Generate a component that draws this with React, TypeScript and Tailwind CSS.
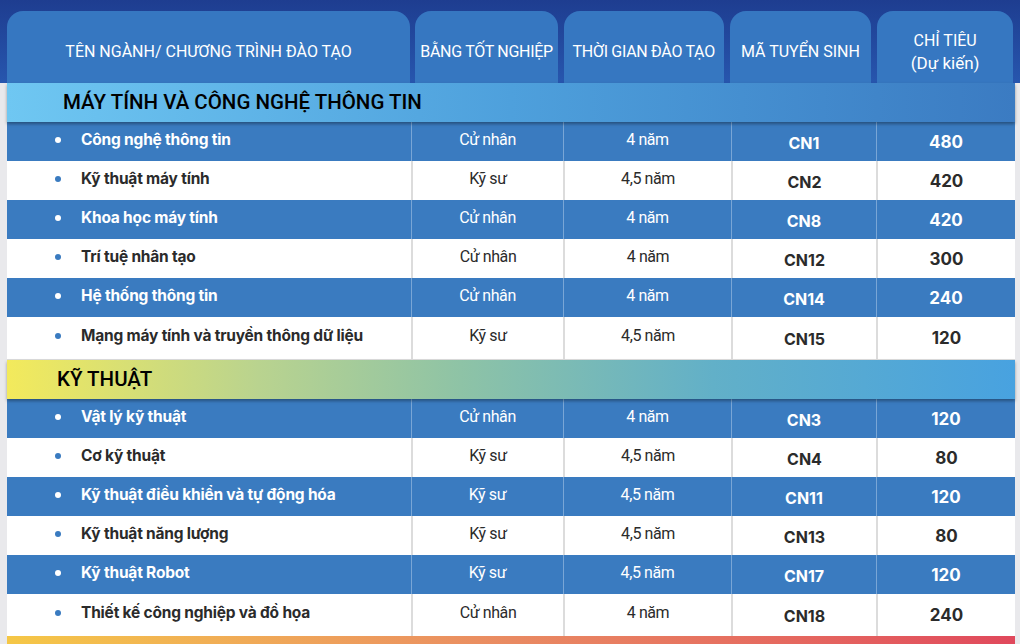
const sec1 = [
  ["Công nghệ thông tin", "Cử nhân", "4 năm", "CN1", "480"],
  ["Kỹ thuật máy tính", "Kỹ sư", "4,5 năm", "CN2", "420"],
  ["Khoa học máy tính", "Cử nhân", "4 năm", "CN8", "420"],
  ["Trí tuệ nhân tạo", "Cử nhân", "4 năm", "CN12", "300"],
  ["Hệ thống thông tin", "Cử nhân", "4 năm", "CN14", "240"],
  ["Mạng máy tính và truyền thông dữ liệu", "Kỹ sư", "4,5 năm", "CN15", "120"],
];

const sec2 = [
  ["Vật lý kỹ thuật", "Cử nhân", "4 năm", "CN3", "120"],
  ["Cơ kỹ thuật", "Kỹ sư", "4,5 năm", "CN4", "80"],
  ["Kỹ thuật điều khiển và tự động hóa", "Kỹ sư", "4,5 năm", "CN11", "120"],
  ["Kỹ thuật năng lượng", "Kỹ sư", "4,5 năm", "CN13", "80"],
  ["Kỹ thuật Robot", "Kỹ sư", "4,5 năm", "CN17", "120"],
  ["Thiết kế công nghiệp và đồ họa", "Cử nhân", "4 năm", "CN18", "240"],
];

const inter = "font-['Inter','Liberation_Sans',sans-serif]";
const roboto = "font-['Roboto','Liberation_Sans',sans-serif]";

function Row({ r, blue, last }: { r: string[]; blue: boolean; last: boolean }) {
  const bg = blue ? "bg-[#3a7bc0] text-white" : "bg-white text-[#2b2b2b]";
  const div = blue ? "border-l border-[#79a6d6]" : "border-l-2 border-[#dcdcdc]";
  const h = last ? "h-[42px]" : "h-[39px]";
  return (
    <div className={`grid grid-cols-[404px_152px_168px_145px_139px] ${h} ${bg}`}>
      <div className={`flex items-center pb-[4px] pl-[48px] text-[15.5px] font-bold tracking-[-0.2px] ${inter}`}>
        <span className={blue ? "mr-[20px] h-[6px] w-[6px] rounded-full bg-white" : "mr-[20px] h-[6px] w-[6px] rounded-full bg-[#3a7bc0]"} />
        {r[0]}
      </div>
      <div className={`flex items-center justify-center pb-[4px] text-[16px] tracking-tight ${roboto} ${div}`}>{r[1]}</div>
      <div className={`flex items-center justify-center pb-[4px] text-[16px] tracking-tight ${roboto} ${div}`}>{r[2]}</div>
      <div className={`flex items-center justify-center pt-[2px] text-[16px] font-bold ${inter} ${div}`}>{r[3]}</div>
      <div className={`flex items-center justify-center pt-[2px] text-[17px] font-bold ${inter} ${div}`}>{r[4]}</div>
    </div>
  );
}

function Section({ title, grad, rows, pl }: { title: string; grad: string; rows: string[][]; pl: string }) {
  return (
    <div>
      <div className={`relative z-10 flex h-[39px] items-center ${pl} text-[20.5px] font-medium text-black shadow-[0_2px_3px_rgba(0,0,0,0.35)] ${roboto} ${grad}`}>
        {title}
      </div>
      {rows.map((r, i) => (
        <Row key={r[3]} r={r} blue={i % 2 === 0} last={i === rows.length - 1} />
      ))}
    </div>
  );
}

export default function App() {
  return (
    <div className="h-[644px] w-[1020px] overflow-hidden bg-[#e9e9ec]">
      <div className={`flex h-[83px] gap-[5px] bg-gradient-to-b from-[#1e3d90] to-[#2756ae] px-[7px] pt-[11px] text-[16px] uppercase text-white ${roboto}`}>
        <div className="flex w-[404px] items-center justify-center rounded-t-[16px] bg-[#3677c1] pt-[10px]">Tên ngành/ chương trình đào tạo</div>
        <div className="flex w-[143px] items-center justify-center rounded-t-[16px] bg-[#3677c1] pt-[10px] tracking-[-0.3px]">Bằng tốt nghiệp</div>
        <div className="ml-[1px] flex w-[160px] items-center justify-center rounded-t-[16px] bg-[#3677c1] pt-[10px] tracking-[-0.3px]">Thời gian đào tạo</div>
        <div className="ml-[1px] flex w-[142px] items-center justify-center rounded-t-[16px] bg-[#3677c1] pt-[10px]">Mã tuyển sinh</div>
        <div className="ml-[1px] flex w-[136px] flex-col items-center justify-center rounded-t-[16px] bg-[#3677c1] pt-[10px] leading-[23px]">
          <span>Chỉ tiêu</span>
          <span className="normal-case text-[17px]">(Dự kiến)</span>
        </div>
      </div>
      <div className="ml-[7px] w-[1008px]">
        <Section
          title="MÁY TÍNH VÀ CÔNG NGHỆ THÔNG TIN"
          pl="pl-[56px]"
          grad="bg-gradient-to-r from-[#6fc7f2] via-[#4ea0dc] to-[#3b7bc2]"
          rows={sec1}
        />
        <div className="h-px bg-[#dcdcdc]" />
        <Section
          title="KỸ THUẬT"
          pl="pl-[50px]"
          grad="bg-[linear-gradient(90deg,#f3ea5c_0%,#b9d38f_25%,#8ec3a6_45%,#62b0c8_70%,#48a2e0_100%)]"
          rows={sec2}
        />
        <div className="h-[8px] bg-gradient-to-r from-[#f5c746] via-[#e98a62] to-[#e0485c]" />
      </div>
    </div>
  );
}
